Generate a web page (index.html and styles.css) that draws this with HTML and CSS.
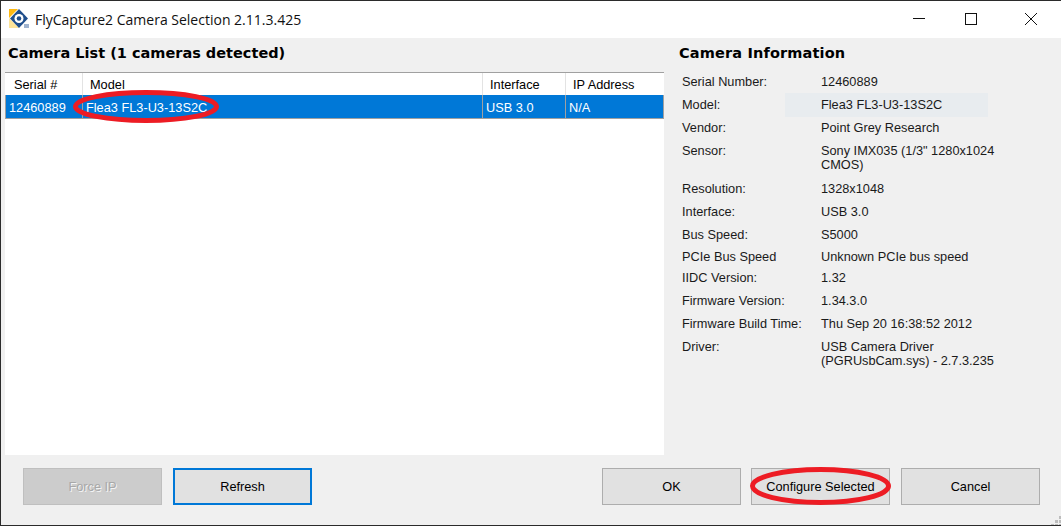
FILE: index.html
```html
<!DOCTYPE html>
<html lang="en">
<head>
<meta charset="utf-8">
<title>FlyCapture2 Camera Selection</title>
<link rel="stylesheet" href="styles.css">
</head>
<body>
<div class="window">
  <header class="titlebar">
    <svg class="appicon" width="20" height="20" viewBox="0 0 20 20">
      <rect x="0" y="0" width="20" height="20" fill="#fff"/>
      <path d="M0 0H9L0 9Z" fill="#fdb913"/>
      <path d="M0 9V19H10Z" fill="#fde49a"/>
      <path d="M10 0L19 9.500L10 19L1 9.500Z" fill="#1f4e8c"/>
      <circle cx="10" cy="9.500" r="4.500" fill="#fff"/>
      <circle cx="10" cy="9.500" r="2.300" fill="#1f4e8c"/>
      <rect x="15" y="15" width="5" height="4" fill="#9fb3cf"/>
    </svg>
    <span class="title">FlyCapture2 Camera Selection 2.11.3.425</span>
    <div class="controls">
      <svg class="ctl ctl-min" width="46" height="30" viewBox="0 0 46 30"><path d="M17 14.500H29" stroke="#111" fill="none"/></svg>
      <svg class="ctl ctl-max" width="46" height="30" viewBox="0 0 46 30"><rect x="17.500" y="9.500" width="11" height="11" stroke="#111" fill="none"/></svg>
      <svg class="ctl" width="46" height="30" viewBox="0 0 46 30"><path d="M17 9L29 21M29 9L17 21" stroke="#111" fill="none"/></svg>
    </div>
  </header>
  <main class="content">
    <section class="left">
      <h2 class="heading heading-left">Camera List (1 cameras detected)</h2>
      <div class="list">
        <div class="row row-head">
          <span class="cell c1">Serial #</span>
          <span class="cell c2">Model</span>
          <span class="cell c3">Interface</span>
          <span class="cell c4">IP Address</span>
        </div>
        <div class="row row-sel">
          <span class="cell c1">12460889</span>
          <span class="cell c2">Flea3 FL3-U3-13S2C</span>
          <span class="cell c3">USB 3.0</span>
          <span class="cell c4">N/A</span>
        </div>
      </div>
    </section>
    <section class="right">
      <h2 class="heading heading-right">Camera Information</h2>
      <dl class="info">
        <div class="pair"><dt>Serial Number:</dt><dd>12460889</dd></div>
        <div class="pair pair-model"><dt>Model:</dt><dd>Flea3 FL3-U3-13S2C</dd></div>
        <div class="pair"><dt>Vendor:</dt><dd>Point Grey Research</dd></div>
        <div class="pair pair-two"><dt>Sensor:</dt><dd>Sony IMX035 (1/3" 1280x1024 CMOS)</dd></div>
        <div class="pair"><dt>Resolution:</dt><dd>1328x1048</dd></div>
        <div class="pair"><dt>Interface:</dt><dd>USB 3.0</dd></div>
        <div class="pair pair-s"><dt>Bus Speed:</dt><dd>S5000</dd></div>
        <div class="pair pair-xs"><dt>PCIe Bus Speed</dt><dd>Unknown PCIe bus speed</dd></div>
        <div class="pair"><dt>IIDC Version:</dt><dd>1.32</dd></div>
        <div class="pair"><dt>Firmware Version:</dt><dd>1.34.3.0</dd></div>
        <div class="pair"><dt>Firmware Build Time:</dt><dd>Thu Sep 20 16:38:52 2012</dd></div>
        <div class="pair pair-two"><dt>Driver:</dt><dd>USB Camera Driver (PGRUsbCam.sys) - 2.7.3.235</dd></div>
      </dl>
    </section>
  </main>
  <footer class="footer">
    <div class="btns">
      <button class="btn btn-disabled">Force IP</button>
      <button class="btn btn-focus">Refresh</button>
    </div>
    <div class="btns">
      <button class="btn btn-ok">OK</button>
      <button class="btn">Configure Selected</button>
      <button class="btn">Cancel</button>
    </div>
  </footer>
  <svg class="mark mark-model" width="152" height="36" viewBox="0 0 152 36"><ellipse cx="76" cy="18.500" rx="70.500" ry="14" fill="none" stroke="#ed1c24" stroke-width="5"/></svg>
  <svg class="mark mark-config" width="146" height="40" viewBox="0 0 146 40"><ellipse cx="72.500" cy="20" rx="68" ry="16.500" fill="none" stroke="#ed1c24" stroke-width="5"/></svg>
  <svg class="mark mark-grip" width="11" height="11" viewBox="0 0 11 11"><path d="M5 6h3v3H5zM1 10h3v1H1zM5 10h3v1H5zM9 2h2v3H9zM9 6h2v3H9zM9 10h2v1H9z" fill="#bdbdbd"/></svg>
</div>
</body>
</html>
```
FILE: styles.css
```css
* { box-sizing: border-box; }
html, body { margin: 0; padding: 0; }
body {
  width: 1061px;
  height: 526px;
  overflow: hidden;
  font-family: "Liberation Sans", Arial, sans-serif;
  font-size: 12.750px;
  color: #000;
  background: #f0f0f0;
}
.window {
  position: relative;
  isolation: isolate;
  width: 1061px;
  height: 526px;
  display: flex;
  flex-direction: column;
  border-top: 1px solid #2b2b2b;
  border-left: 1px solid #2b2b2b;
  border-bottom: 1px solid #2b2b2b;
  background: #f0f0f0;
}
.titlebar {
  height: 37px;
  flex: none;
  display: flex;
  align-items: center;
  background: #fff;
  padding-left: 8px;
}
.appicon { flex: none; margin-top: -1px; }
.title {
  margin-left: 6px;
  font-family: "Open Sans", "Noto Sans", sans-serif;
  font-size: 14px;
  color: #111;
}
.controls { margin-left: auto; display: flex; margin-right: 7px; margin-top: -1px; }
.ctl { display: block; }
.ctl-min { margin-right: 6px; }
.ctl-max { margin-right: 14px; }
.content { flex: 1; display: flex; min-height: 0; }
.left { width: 663px; flex: none; padding-left: 4px; }
.heading {
  margin: 0;
  font-family: "DejaVu Sans", Verdana, sans-serif;
  font-weight: 700;
  font-size: 14.500px;
  line-height: 20px;
}
.heading-left { padding: 5px 0 9px 3px; }
.heading-right { padding: 5px 0 12px 0; letter-spacing: 0.15px; }
.list {
  height: 383px;
  background: #fff;
  border-top: 1px solid #a0a0a0;
}
.row { display: flex; }
.row-head { height: 22px; line-height: 24px; }
.row-sel {
  height: 24px;
  line-height: 25px;
  background: #0078d7;
  color: #fff;
  border-bottom: 1px solid #a0a0a0;
  border-left: 1px solid #a0a0a0;
  border-right: 1px solid #a0a0a0;
}
.cell { display: block; padding-left: 7px; border-right: 1px solid #e3e3e3; }
.row-head .c1 { padding-left: 9px; }
.row-sel .cell { padding-left: 3px; border-right-color: #a0a0a0; }
.c1 { width: 78px; }
.row-sel .c1 { width: 77px; }
.c2 { width: 400px; }
.c3 { width: 83px; }
.c4 { flex: 1; border-right: 0; }
.right { flex: 1; padding-left: 15px; }
.info { margin: 0; padding: 0 0 0 3px; width: 330px; }
.pair {
  display: grid;
  grid-template-columns: 139px 1fr;
  height: 23px;
  line-height: 14px;
  color: #1a1a1a;
}
.pair-model { position: relative; }
.pair-model::before {
  content: "";
  position: absolute;
  z-index: -1;
  left: 103px;
  top: -5px;
  width: 203px;
  height: 24px;
  background: #e8ecef;
}
.pair-two { height: 38px; }
.pair-s { height: 22px; }
.pair-xs { height: 21px; }
.pair dt, .pair dd { margin: 0; }
.pair dd { width: 185px; }
.footer {
  height: 70px;
  flex: none;
  display: flex;
  justify-content: space-between;
  padding: 13px 21px 0 22px;
}
.btns { display: flex; gap: 11px; }
.btn-ok { margin-right: -1px; }
.btn {
  width: 139px;
  height: 37px;
  font-family: "Liberation Sans", Arial, sans-serif;
  font-size: 12.750px;
  color: #000;
  background: #e1e1e1;
  border: 1px solid #adadad;
  padding: 0;
}
.btn-disabled { background: #cccccc; border-color: #bfbfbf; color: #a8a8a8; text-shadow: 1px 1px 0 #f4f4f4; }
.btn-focus { border: 2px solid #0078d7; }
.mark { position: absolute; }
.mark-model { left: 69px; top: 87px; }
.mark-config { left: 747px; top: 465px; }
.mark-grip { right: 0; bottom: 0; }
```
